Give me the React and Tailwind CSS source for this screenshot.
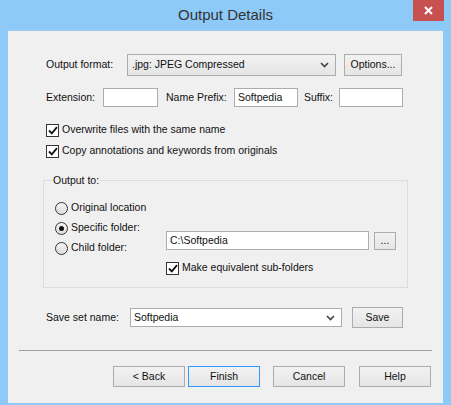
import React from "react";

const font = { fontFamily: '"Liberation Sans", Arial, sans-serif' };

function Chevron() {
  return (
    <svg width="9" height="6" viewBox="0 0 9 6" className="shrink-0">
      <path d="M1 1 L4.5 4.5 L8 1" fill="none" stroke="#444" strokeWidth="1.6" />
    </svg>
  );
}

function Button({ children, className = "", focus = false }) {
  return (
    <div
      className={`flex items-center justify-center border bg-gradient-to-b from-[#f2f2f2] to-[#e5e5e5] text-[#111] ${
        focus ? "border-[#3399ff]" : "border-[#acacac]"
      } ${className}`}
    >
      {children}
    </div>
  );
}

function TextBox({ value = "", className = "" }) {
  return (
    <div className={`flex items-center border border-[#abadb3] bg-white px-[3px] text-[#111] ${className}`}>
      {value}
    </div>
  );
}

function Check({ label }) {
  return (
    <div className="flex h-[14px] items-center gap-[3px]">
      <div className="flex h-[13px] w-[13px] items-center justify-center border border-[#333] bg-white">
        <svg width="10" height="9" viewBox="0 0 10 9">
          <path d="M1 4.5 L3.8 7.3 L9 1.2" fill="none" stroke="#111" strokeWidth="1.8" />
        </svg>
      </div>
      <span>{label}</span>
    </div>
  );
}

function Radio({ label, checked = false }) {
  return (
    <div className="flex h-[20px] items-center gap-[3px]">
      <div className="flex h-[13px] w-[13px] items-center justify-center rounded-full border border-[#333] bg-gradient-to-b from-[#f4f4f4] to-[#dedede]">
        {checked && <div className="h-[5px] w-[5px] rounded-full bg-[#111]" />}
      </div>
      <span>{label}</span>
    </div>
  );
}

export default function App() {
  return (
    <div className="flex h-[405px] w-[451px] flex-col bg-[#8ecaf8] text-[10.5px] text-[#111]" style={font}>
      <div className="relative flex h-[30px] shrink-0 items-center justify-center">
        <span className="text-[15px] text-[#333]">Output Details</span>
        <div className="absolute right-[7px] top-0 flex h-[21px] w-[31px] items-center justify-center bg-[#c75050]">
          <svg width="9" height="9" viewBox="0 0 9 9">
            <path d="M1 1 L8 8 M8 1 L1 8" stroke="#fff" strokeWidth="2" />
          </svg>
        </div>
      </div>

      <div className="mx-[8px] mb-[2px] flex flex-1 flex-col border-t border-[#a3cbee] bg-[#f0f0f0]">
        {/* output format */}
        <div className="ml-[38px] mt-[23px] flex h-[22px] items-center">
          <span className="w-[81px]">Output format:</span>
          <div className="flex h-[22px] w-[209px] items-center justify-between border border-[#acacac] bg-gradient-to-b from-[#f2f2f2] to-[#e5e5e5] pl-[4px] pr-[6px]">
            <span>.jpg: JPEG Compressed</span>
            <Chevron />
          </div>
          <Button className="ml-[8px] h-[22px] w-[58px]">Options...</Button>
        </div>

        {/* extension row */}
        <div className="ml-[38px] mt-[12px] flex h-[19px] items-center">
          <span className="w-[57px]">Extension:</span>
          <TextBox className="h-[19px] w-[55px]" />
          <span className="ml-[8px] w-[68px]">Name Prefix:</span>
          <TextBox className="h-[19px] w-[64px]" value="Softpedia" />
          <span className="ml-[6px] w-[35px]">Suffix:</span>
          <TextBox className="h-[19px] w-[64px]" />
        </div>

        <div className="ml-[38px] mt-[16px] flex flex-col gap-[7px]">
          <Check label="Overwrite files with the same name" />
          <Check label="Copy annotations and keywords from originals" />
        </div>

        {/* output to group */}
        <div className="relative ml-[35px] mt-[22px] flex h-[108px] w-[365px] border border-[#dcdcdc]">
          <span className="absolute -top-[7px] left-[8px] bg-[#f0f0f0] px-[1px] leading-[13px]">Output to:</span>
          <div className="ml-[11px] mt-[17px] flex w-[111px] flex-col">
            <Radio label="Original location" />
            <Radio label="Specific folder:" checked />
            <Radio label="Child folder:" />
          </div>
          <div className="mt-[50px] flex flex-col">
            <div className="flex items-center">
              <TextBox className="h-[19px] w-[203px]" value="C:\Softpedia" />
              <Button className="ml-[5px] h-[18px] w-[22px]">...</Button>
            </div>
            <div className="mt-[11px]">
              <Check label="Make equivalent sub-folders" />
            </div>
          </div>
        </div>

        {/* save set name */}
        <div className="ml-[38px] mt-[19px] flex items-center">
          <span className="w-[84px]">Save set name:</span>
          <div className="flex h-[19px] w-[212px] items-center justify-between border border-[#abadb3] bg-white pl-[3px] pr-[6px]">
            <span>Softpedia</span>
            <Chevron />
          </div>
          <Button className="ml-[10px] h-[21px] w-[51px]">Save</Button>
        </div>

        <div className="mx-[11px] mt-[22px] h-[2px] border-t border-[#a0a0a0] border-b-white" />

        <div className="mr-[12px] mt-[14px] flex justify-end">
          <Button className="h-[21px] w-[72px]">&lt; Back</Button>
          <Button className="ml-[3px] h-[21px] w-[72px]" focus>
            Finish
          </Button>
          <Button className="ml-[13px] h-[21px] w-[72px]">Cancel</Button>
          <Button className="ml-[14px] h-[21px] w-[72px]">Help</Button>
        </div>
      </div>
    </div>
  );
}
